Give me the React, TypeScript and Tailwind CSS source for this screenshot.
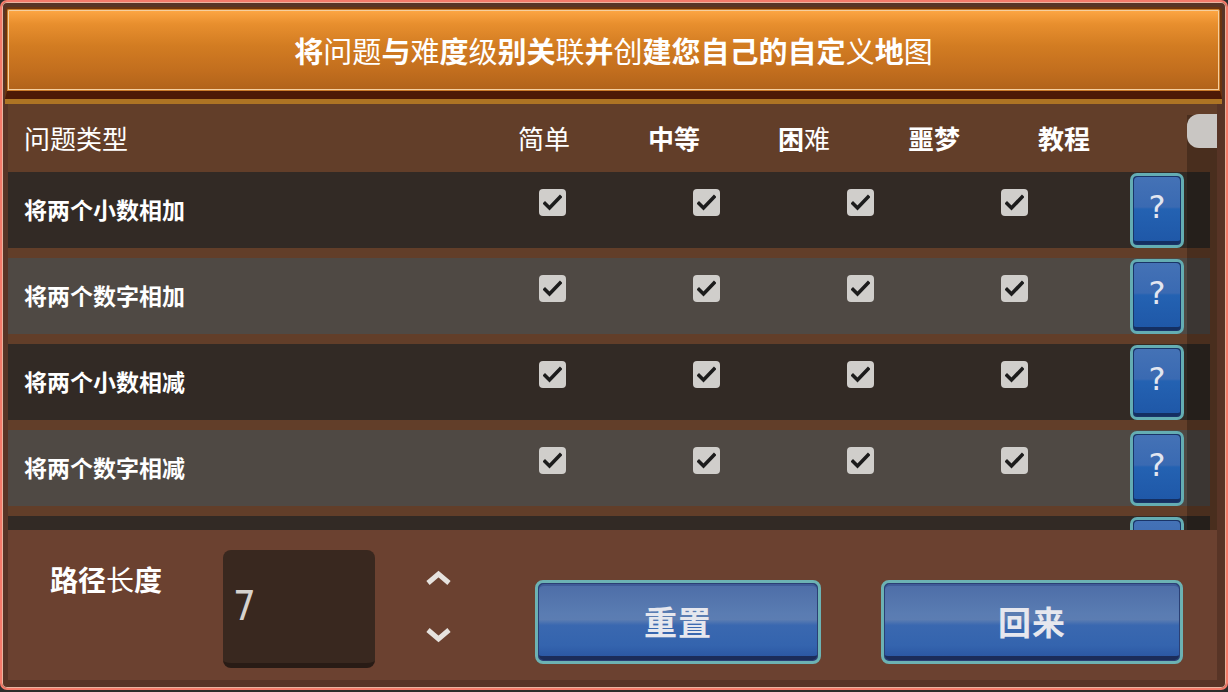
import React from "react";

const TITLE = "将问题与难度级别关联并创建您自己的自定义地图";
const TITLE_BOLD = "1001010110101111111010";

const ROWS = ["将两个小数相加", "将两个数字相加", "将两个小数相减", "将两个数字相减", ""];

const Check = () => (
  <div className="w-[27px] h-[27px] shrink-0 rounded-[4px] bg-[#d0cecb] flex items-center justify-center mt-[17px] self-start">
    <svg width="19" height="17" viewBox="0 0 19 17">
      <path d="M2 9.5 L6.5 14 L17 3" fill="none" stroke="#1c1c1c" strokeWidth="3.6" strokeLinecap="square" />
    </svg>
  </div>
);

const HelpButton = ({ mark }: { mark: boolean }) => (
  <div className="ml-[102px] w-[54px] h-[75px] mt-[1px] self-start rounded-[7px] border-[3px] border-[#64adb3] bg-[#1a3468] p-[1px]">
    <div className="h-full rounded-[4px] border-b-[3px] border-[#142f62] bg-[linear-gradient(to_bottom,#4472b6_0%,#3a6ab2_47%,#2462b2_50%,#1f58a8_100%)] flex items-center justify-center">
      {mark && (
        <span className="font-['DejaVu_Sans',sans-serif] text-[32px] leading-none text-[#e2e6f0] -mt-[5px]">?</span>
      )}
    </div>
  </div>
);

const BigButton = ({ label, width, className }: { label: string; width: string; className?: string }) => (
  <div className={`${width} h-[84px] shrink-0 rounded-[8px] border-[3px] border-[#6cb2b3] bg-[#2b3f74] p-[1px] ${className ?? ""}`}>
    <div className="h-full rounded-[5px] border-t-[2px] border-t-[#3f5c98] border-b-[4px] border-b-[#1b2c5a] bg-[linear-gradient(to_bottom,#4e6ea8_0%,#5a7cb2_40%,#5c7db2_48%,#3a68b0_56%,#3464ae_85%,#2c58a4_100%)] flex items-center justify-center">
      <span className="font-['Noto_Sans_CJK_SC',sans-serif] font-bold text-[33px] leading-none text-[#e6e7ee] tracking-[1px]">
        {label}
      </span>
    </div>
  </div>
);

export default function App() {
  return (
    <div className="w-[1228px] h-[692px] bg-[#2b2b2b] font-['Noto_Sans_CJK_SC',sans-serif]">
      <div className="w-[1228px] h-[690px] rounded-[7px] border-2 border-[#f47a6a] bg-[#573426] shadow-[inset_0_0_0_1px_#e9b5a2] flex flex-col pt-[5px]">
        {/* Title bar */}
        <div className="ml-[3px] mr-[4px] h-[92px] rounded-t-[4px] border-x-2 border-t-2 border-[#6b3510] border-b-[8px] border-b-[#4d1a06] bg-[linear-gradient(to_bottom,#ffa845_0%,#e88f2e_18%,#d27c22_45%,#c26e1e_75%,#b0621a_100%)] shadow-[inset_0_0_0_1px_#c97b2a,inset_0_0_0_2px_#f6cf9e] flex items-center justify-center">
          <div className="text-[29px] leading-none text-white flex mt-[1px]">
            {TITLE.split("").map((ch, i) => (
              <span key={i} className={TITLE_BOLD[i] === "1" ? "font-bold" : "font-normal"}>
                {ch}
              </span>
            ))}
          </div>
        </div>
        <div className="ml-[3px] mr-[4px] h-[5px] bg-[#ad7424]" />

        {/* Table */}
        <div className="ml-[6px] mr-[9px] h-[426px] relative overflow-hidden bg-[#623e29]">
          <div className="h-[68px] flex items-center text-[26px] leading-none text-white">
            <div className="w-[471px] pl-[16px] font-normal">问题类型</div>
            <div className="w-[130px] text-center font-normal">简单</div>
            <div className="w-[130px] text-center font-bold">中等</div>
            <div className="w-[130px] flex justify-center">
              <span className="font-bold">困</span>
              <span className="font-normal">难</span>
            </div>
            <div className="w-[130px] text-center font-bold">噩梦</div>
            <div className="w-[130px] text-center font-bold">教程</div>
          </div>

          <div className="flex flex-col gap-[10px] mr-[7px]">
            {ROWS.map((r, i) => (
              <div key={i} className={`h-[76px] shrink-0 flex items-center ${i % 2 === 0 ? "bg-[#322a25]" : "bg-[#4f4944]"}`}>
                <div className="w-[531px] pl-[16px] text-[23px] leading-none font-bold text-white -mt-[1px]">{r}</div>
                <div className="flex gap-[127px] self-start">
                  <Check />
                  <Check />
                  <Check />
                  <Check />
                </div>
                <HelpButton mark={r !== ""} />
              </div>
            ))}
          </div>

          {/* Scrollbar */}
          <div className="absolute right-0 top-[11px] bottom-0 w-[30px] bg-black/25" />
          <div className="absolute right-0 top-[10px] w-[30px] h-[34px] rounded-l-[12px] bg-[#c9c6c3]" />
        </div>

        {/* Bottom */}
        <div className="ml-[6px] mr-[9px] h-[150px] bg-[#6b4130] flex items-start pl-[42px]">
          <div className="mt-[35px] shrink-0 whitespace-nowrap flex text-[28px] leading-none text-white">
            <span className="font-bold">路径</span>
            <span className="font-normal">长</span>
            <span className="font-bold">度</span>
          </div>
          <div className="ml-[61px] mt-[20px] w-[152px] h-[118px] shrink-0 rounded-[8px] bg-[#39281f] border-b-[5px] border-[#281b15] flex items-center pl-[10px]">
            <span className="font-['DejaVu_Sans_Condensed','DejaVu_Sans',sans-serif] text-[40px] leading-none text-[#d6d2ce] -mt-[2px]">7</span>
          </div>
          <div className="ml-[50px] mt-[40px] shrink-0 flex flex-col gap-[41px]">
            <svg width="27" height="16" viewBox="0 0 27 16">
              <polyline points="3,13 13.5,4 24,13" fill="none" stroke="#e6e2de" strokeWidth="5" />
            </svg>
            <svg width="27" height="16" viewBox="0 0 27 16">
              <polyline points="3,3 13.5,12 24,3" fill="none" stroke="#e6e2de" strokeWidth="5" />
            </svg>
          </div>
          <BigButton label="重置" width="w-[286px]" className="ml-[83px] mt-[50px]" />
          <BigButton label="回来" width="w-[302px]" className="ml-[60px] mt-[50px]" />
        </div>
      </div>
    </div>
  );
}
